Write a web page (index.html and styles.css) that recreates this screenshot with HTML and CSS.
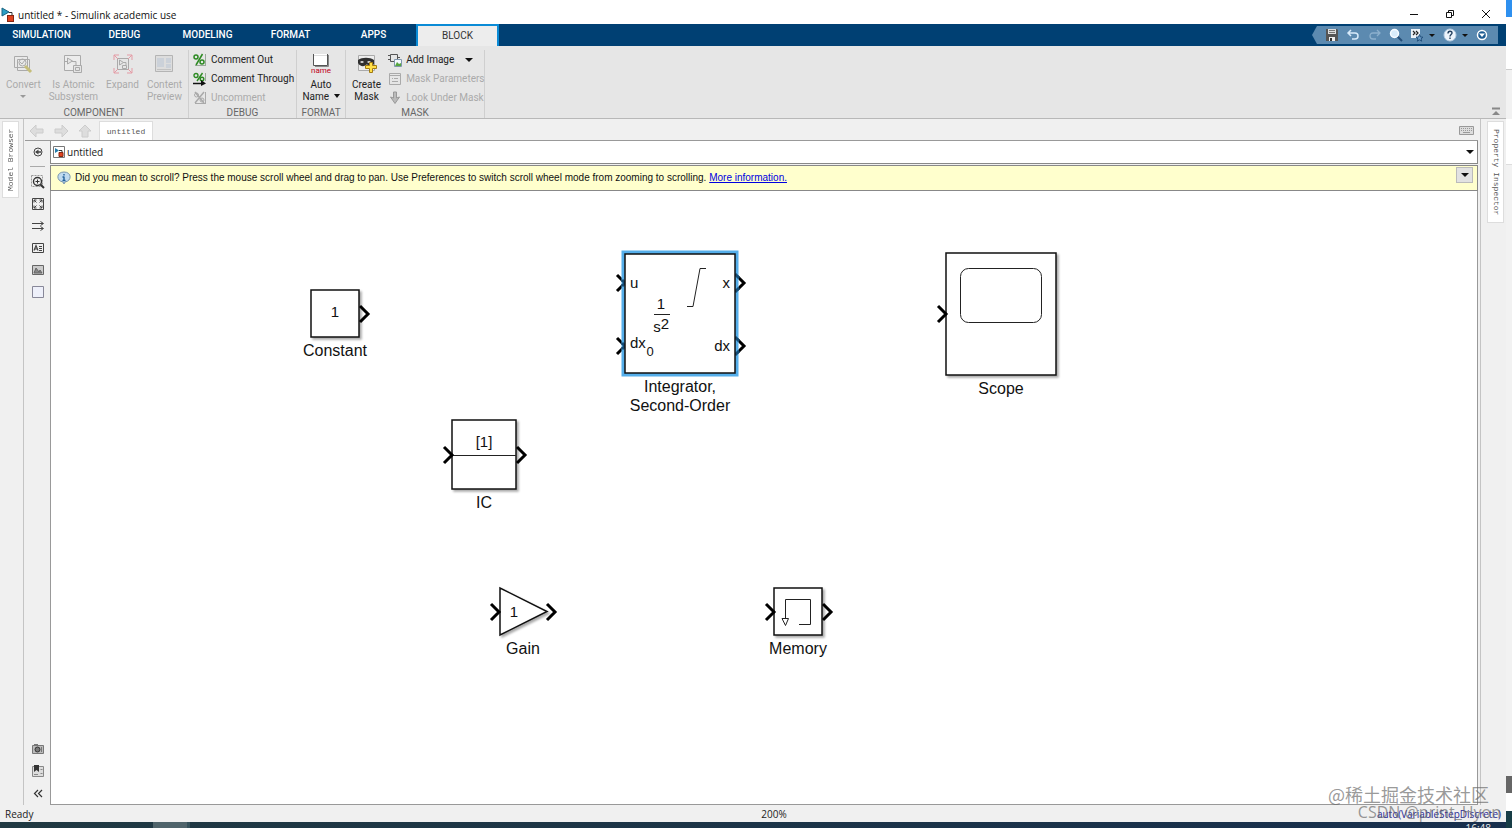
FILE: index.html
```html
<!DOCTYPE html>
<html lang="en">
<head>
<meta charset="utf-8">
<title>untitled * - Simulink academic use</title>
<link rel="stylesheet" href="styles.css">
</head>
<body>
<div class="desktop">
<div class="app">
  <header class="titlebar">
    <svg class="logo" width="14" height="14" viewBox="0 0 14 14"><path d="M1 0v8l7-4z" fill="#2b9fc6" stroke="#1b6582"/><path d="M8 4.500h3v3" fill="none" stroke="#333"/><rect x="6.500" y="7.500" width="6" height="6" fill="#e0431f" stroke="#842713"/></svg>
    <h1 class="title">untitled * - Simulink academic use</h1>
    <button class="win" aria-label="Minimize"><svg width="10" height="10"><path d="M1 5.500h8" stroke="#111"/></svg></button>
    <button class="win" aria-label="Restore"><svg width="10" height="10" fill="none" stroke="#111"><path d="M1.500 3.500h5v5h-5zM3.500 3.500v-2h5v5h-2"/></svg></button>
    <button class="win" aria-label="Close"><svg width="10" height="10"><path d="M1 1l8 8M9 1l-8 8" stroke="#111"/></svg></button>
  </header>

  <nav class="tabs">
    <button class="tab">SIMULATION</button>
    <button class="tab">DEBUG</button>
    <button class="tab">MODELING</button>
    <button class="tab">FORMAT</button>
    <button class="tab">APPS</button>
    <button class="tab active">BLOCK</button>
    <div class="quick">
      <button aria-label="Save"><svg width="14" height="14"><path d="M1 1h11l1 1v11H1z" fill="#555"/><path d="M3 1h8v5H3z" fill="#ddd"/><path d="M4 2.500h6M4 4.500h6" stroke="#777"/><path d="M4 9h6v4H4z" fill="#eee"/><path d="M5 10h2v3H5z" fill="#333"/></svg></button>
      <button aria-label="Undo"><svg width="14" height="14" fill="none" stroke="#d7eafa" stroke-width="1.500"><path d="M5 2L2 5l3 3M2 5h7c4 0 4 6 0 6H6"/></svg></button>
      <button aria-label="Redo"><svg width="14" height="14" fill="none" stroke="#8cb0cd" stroke-width="1.300"><path d="M9 2l3 3-3 3M12 5H5c-4 0-4 6 0 6h3"/></svg></button>
      <button aria-label="Search"><svg width="14" height="14"><path d="M8 8l5 5" stroke="#254e78" stroke-width="2"/><circle cx="5.500" cy="5.500" r="4" fill="#d9ecfa" stroke="#f7fbff" stroke-width="1.500"/></svg></button>
      <button class="with-caret" aria-label="Favorites"><svg width="14" height="14"><path d="M1 1h9v9H1z" fill="#eef3f8"/><path d="M3 3l2 2-2 2M6 3l2 2-2 2" fill="none" stroke="#222" stroke-width="1.200"/><path d="M9.500 6.500l1 2.500 2.500.2-2 1.600.7 2.400-2.200-1.400-2.200 1.400.7-2.400-2-1.600 2.500-.2z" fill="#6e9fc9" stroke="#24517d"/></svg><i class="caret"></i></button>
      <button class="with-caret" aria-label="Help"><svg width="14" height="14"><circle cx="7" cy="7" r="6" fill="#edf4fb" stroke="#b7cde2"/><path d="M5 5.500c0-3 4-3 4-.5C9 6.500 7 6.500 7 8.500M7 9.500v1.500" fill="none" stroke="#24405f" stroke-width="1.400"/></svg><i class="caret"></i></button>
      <button aria-label="Quick access options"><svg width="14" height="14"><circle cx="7" cy="7" r="4.500" fill="#1e5c92" stroke="#fff" stroke-width="1.500"/><path d="M4 5.500h6L7 9z" fill="#fff"/></svg></button>
    </div>
  </nav>

  <section class="ribbon" aria-label="Block">
    <div class="group component">
      <div class="items">
        <button class="big" disabled><svg width="20" height="20" fill="none" stroke="#aaa"><path d="M1.500 2.500h13v11h-13zM4.500 5.500h12v11h-12z" fill="#e9e9e9"/><circle cx="9.500" cy="8.500" r="3.500"/><path d="M7 8l2 2 3-4"/><path d="M12 12l6 6" stroke="#c5bd79" stroke-width="3"/></svg><span>Convert</span><i class="caret"></i></button>
        <button class="big" disabled><svg width="20" height="20" fill="none" stroke="#aaa"><path d="M1.500 1.500h16v15h-16z" fill="#ececec"/><path d="M4.500 4v6l5-3zM9 7.500h4v4M2 7.500h2M10.500 11.500h8v7h-8z" fill="#e5e5e5"/><path d="M12.500 13.500h4v3h-4z"/></svg><span>Is Atomic<br>Subsystem</span></button>
        <button class="big" disabled><svg width="20" height="20" fill="none" stroke="#aaa"><path d="M4.500 4.500h11v11h-11z"/><path d="M6.500 6v5l4-2.500zM10 8.500h3v3M9.500 11.500h4v3h-4z"/><path d="M1 6V1h5M14 1h5v5M19 14v5h-5M6 19H1v-5M1 1l4 4M19 1l-4 4M19 19l-4-4M1 19l4-4" stroke="#e49ba5"/></svg><span>Expand</span></button>
        <button class="big" disabled><svg width="20" height="20"><path d="M1.500 1.500h17v16h-17z" fill="#ddd" stroke="#b4b4b4"/><path d="M3 4h7v9H3zM12 4h5v5h-5zM12 10h5v4h-5z" fill="#cbd1d9"/><path d="M3 15.500h14" stroke="#c2c2c2"/></svg><span>Content<br>Preview</span></button>
      </div>
      <h2>COMPONENT</h2>
    </div>
    <div class="group debug">
      <div class="rows">
        <button class="small"><svg width="14" height="14" fill="none"><path d="M12.500 1v12M2 12.500h11" stroke="#9aa89a"/><g stroke="#2d8a22" stroke-width="1.500"><circle cx="3" cy="4" r="2"/><circle cx="9" cy="9" r="2"/><path d="M9.500 1L3 12"/></g></svg>Comment Out</button>
        <button class="small"><svg width="14" height="14" fill="none"><path d="M12.500 1v8" stroke="#9aa89a"/><g stroke="#2d8a22" stroke-width="1.400"><circle cx="3" cy="3.500" r="2"/><circle cx="9" cy="7" r="1.800"/><path d="M9.500 1L4 9"/></g><path d="M0 11.500h9" stroke="#111" stroke-width="1.500"/><path d="M8 8l5 3.500L8 14z" fill="#111"/></svg>Comment Through</button>
        <button class="small" disabled><svg width="14" height="14" fill="none" stroke="#aaa"><path d="M12.500 1v12M2 12.500h11"/><circle cx="3.500" cy="4" r="2"/><circle cx="9" cy="9" r="2"/><path d="M2 1l9 11M11 1L2 12" stroke-width="1.500"/></svg>Uncomment</button>
      </div>
      <h2>DEBUG</h2>
    </div>
    <div class="group format">
      <div class="items">
        <button class="big"><svg class="name-icon" width="22" height="20"><path d="M3.500 0v11.500h14V0" fill="#fff" stroke="#555"/><path d="M4 1.500h13" stroke="#ddd"/><path d="M18.500 1v11.500H5" fill="none" stroke="#888"/><text x="11" y="19" text-anchor="middle">name</text></svg><span>Auto<br>Name <i class="caret"></i></span></button>
      </div>
      <h2>FORMAT</h2>
    </div>
    <div class="group mask">
      <div class="items">
        <button class="big"><svg width="20" height="20"><path d="M1.500 1.500h16v15h-16z" fill="#eee" stroke="#aaa"/><path d="M1 6c4-3 12-3 16 0v4c-2 3-6 3-7 0-2 3-7 3-9-1z" fill="#303030"/><path d="M3 8q2-2 4 0-2 2-4 0M10 8q2-2 4 0-2 2-4 0" fill="#ddd"/><path d="M12.500 8.500h3v3h4v3h-4v4h-3v-4h-4v-3h4z" fill="#ffdf48" stroke="#a27b12"/></svg><span>Create<br>Mask</span></button>
        <div class="rows">
          <button class="small"><svg width="14" height="14" fill="none" stroke="#555"><path d="M2.500 1.500h7v7h-7zM0 2.500h2M0 6.500h2M10 4.500h2"/><path d="M6.500 6.500h7v7h-7z" fill="#f4f8ff" stroke="#8096ac"/><path d="M7 13l2-4 2 2 2-1v3z" fill="#56a63e" stroke="none"/></svg>Add Image<i class="caret push"></i></button>
          <button class="small" disabled><svg width="14" height="14" fill="none" stroke="#aaa"><path d="M1.500 1.500h11v11h-11zM1.500 3.500h11M4 6.500h1M6 6.500h4M4 9.500h6"/></svg>Mask Parameters</button>
          <button class="small" disabled><svg width="14" height="14"><path d="M5.500 1v6l-3-1L7 12.500 11.500 6l-3 1V1z" fill="#bbb" stroke="#999"/></svg>Look Under Mask</button>
        </div>
      </div>
      <h2>MASK</h2>
    </div>
    <button class="collapse" aria-label="Collapse ribbon"><svg width="10" height="10"><path d="M1 1.500h8" stroke="#888" stroke-width="2"/><path d="M5 4l4 4H1z" fill="#888"/></svg></button>
  </section>

  <main class="workspace">
    <aside class="dock left"><button class="side-tab flipped">Model Browser</button></aside>
    <div class="editor">
      <div class="doc-tabs">
        <button class="nav" aria-label="Back"><svg width="16" height="14"><path d="M1 7l6-6v4h7v4H7v4z"/></svg></button>
        <button class="nav" aria-label="Forward"><svg width="16" height="14"><path d="M15 7L9 1v4H2v4h7v4z"/></svg></button>
        <button class="nav" aria-label="Up"><svg width="16" height="14"><path d="M8 1l6 6h-3v6H5V7H2z"/></svg></button>
        <button class="doc">untitled</button>
        <button class="keyboard" aria-label="Keyboard"><svg width="15" height="9" fill="none" stroke="#999"><path d="M.5.500h14v8H.5z" fill="#ddd"/><path d="M2 2.500h11M2 4.500h11" stroke-dasharray="1 1"/><path d="M4 6.500h7"/></svg></button>
      </div>
      <div class="edit-body">
        <div class="palette">
          <button aria-label="Hide browser"><svg width="14" height="14" fill="none" stroke="#444"><circle cx="7" cy="7" r="4"/><path d="M5 7h5" stroke-width="1.500"/><path d="M7.500 4.500L4 7l3.500 2.500z" fill="#444" stroke="none"/></svg></button>
          <hr>
          <button aria-label="Zoom"><svg width="14" height="14" fill="none" stroke="#333"><path d="M.5.500h11v11H.5z" stroke="#999" stroke-dasharray="2 1"/><circle cx="6.500" cy="6.500" r="4" fill="#eee" stroke-width="1.400"/><path d="M4.500 6.500h4M6.500 4.500v4"/><path d="M9.500 9.500L13 13" stroke-width="2"/></svg></button>
          <button aria-label="Fit to view"><svg width="14" height="14" fill="none" stroke="#444"><path d="M1.500 1.500h11v11h-11z"/><path d="M3 5.500V3h2.500M8.500 3H11v2.500M11 8.500V11H8.500M5.500 11H3V8.500M3 3l2.500 2.500M11 3L8.500 5.500M11 11L8.500 8.500M3 11l2.500-2.500"/></svg></button>
          <button aria-label="Signals"><svg width="14" height="14" fill="none" stroke="#444"><path d="M1 4.500h11M9.500 2.500l3 2-3 2M1 9.500h11M9.500 7.500l3 2-3 2"/></svg></button>
          <button aria-label="Annotation"><svg width="14" height="14" fill="none" stroke="#444"><path d="M1.500 2.500h11v9h-11z"/><path d="M3 9.500l2-5 2 5M4 8h2" stroke-width="1.200"/><path d="M8 5.500h3M8 7.500h3M8 9.500h3"/></svg></button>
          <button aria-label="Image"><svg width="14" height="14" fill="none" stroke="#666"><path d="M1.500 2.500h11v9h-11z" fill="#ccc"/><path d="M3 10l2-5 3 4 1-2 2 3z" fill="#888"/></svg></button>
          <button aria-label="Area"><svg width="14" height="14"><path d="M1.500 1.500h11v11h-11z" fill="#eef0fa" stroke="#889"/></svg></button>
          <span class="spacer"></span>
          <button aria-label="Screenshot"><svg width="14" height="14" fill="none" stroke="#777"><path d="M1.500 3.500h11v8h-11zM3 2.500h4" fill="#bbb"/><circle cx="6.500" cy="7.500" r="2.500" fill="#777" stroke="#333"/><path d="M10.500 5v5"/></svg></button>
          <button aria-label="Bookmarks"><svg width="14" height="14" fill="none" stroke="#888"><path d="M1.500 2.500h11v10h-11z" fill="#ddd"/><path d="M3 1h5v7L5.500 6 3 8z" fill="#333" stroke="none"/><path d="M9.500 5.500h2M9.500 9.500h2M3 10.500h4"/></svg></button>
          <button aria-label="Collapse palette"><svg width="14" height="14" fill="none" stroke="#333" stroke-width="1.200"><path d="M7 4L3.500 7.500 7 11M11 4L7.500 7.500 11 11"/></svg></button>
        </div>
        <div class="stage">
          <div class="address">
            <svg width="12" height="12"><path d="M.5.500h11v11H.5z" fill="#fff" stroke="#777"/><path d="M2 2v5l4-2.500z" fill="#257caa"/><path d="M6 4.500h3V7" fill="none" stroke="#333"/><path d="M6 6.500h4v4H6z" fill="#e0431f" stroke="#842713"/></svg>
            <span>untitled</span>
            <button aria-label="Model path"><i class="caret"></i></button>
          </div>
          <div class="banner">
            <svg width="14" height="14"><path d="M7 1c8 0 8 9 1 10l-1 2-1-2C-1 10-1 1 7 1z" fill="#bfdaef" stroke="#7895ae"/><path d="M7 3v1.500M7 5.500V10M5.500 6H7M5.500 9.500h3" stroke="#23619b" stroke-width="1.400"/></svg>
            <p>Did you mean to scroll? Press the mouse scroll wheel and drag to pan. Use Preferences to switch scroll wheel mode from zooming to scrolling. <a href="#">More information.</a></p>
            <button aria-label="Message options"><i class="caret"></i></button>
          </div>
          <div class="canvas">
            <figure class="node constant">
              <svg width="98" height="49"><rect class="box" x="25" y="1" width="48" height="47"/><path class="port" d="M74 17l8 8-8 8"/><text x="49" y="28">1</text></svg>
              <figcaption>Constant</figcaption>
            </figure>
            <figure class="node ic">
              <svg width="114" height="71"><rect class="box" x="25" y="1" width="64" height="69"/><path class="thin" d="M25 36.500h64"/><path class="port" d="M17 28l8 8-8 8M90 28l8 8-8 8"/><text x="57" y="28">[1]</text></svg>
              <figcaption>IC</figcaption>
            </figure>
            <figure class="node gain">
              <svg width="98" height="49"><path class="box" d="M26 1v47l47-23.500z"/><path class="port" d="M17 17l8 8-8 8M73 17l8 8-8 8"/><text x="40" y="30">1</text></svg>
              <figcaption>Gain</figcaption>
            </figure>
            <figure class="node memory">
              <svg width="98" height="49"><rect class="box" x="25" y="1" width="48" height="47"/><path class="port" d="M17 17l8 8-8 8M74 17l8 8-8 8"/><path class="thin" d="M50 37.500h11.500v-25h-25V31M33 31.500h6.500l-3 7z"/></svg>
              <figcaption>Memory</figcaption>
            </figure>
            <figure class="node integrator">
              <svg width="160" height="121"><path class="port" d="M17 22l8 8-8 8M17 85l8 8-8 8M135 21l9 9-9 9M135 84l9 9-9 9"/><rect class="halo" x="23.500" y="-0.500" width="113" height="122"/><path class="through" d="M22 27l3 3-3 3M22 90l3 3-3 3M135 21l4 4M139 35l-4 4M135 84l4 4M139 98l-4 4"/><rect class="box flat" x="25" y="1" width="110" height="119"/>
                <text class="start" x="30" y="35">u</text><text class="start" x="30" y="95">dx</text><text x="50" y="103" class="sub">0</text><text class="end" x="130" y="35">x</text><text class="end" x="130" y="98">dx</text><text x="61" y="56">1</text><path class="thin" d="M54 61.500h16"/><text x="57" y="79">s</text><text x="65" y="76">2</text><path class="thin" d="M87 53.500h6l7-38h6"/></svg>
              <figcaption>Integrator,<br>Second-Order</figcaption>
            </figure>
            <figure class="node scope">
              <svg width="160" height="124"><rect class="box" x="25" y="1" width="110" height="122"/><path class="port" d="M17 54l8 8-8 8"/><rect class="thin" x="39.500" y="16.500" width="81" height="54" rx="8"/></svg>
              <figcaption>Scope</figcaption>
            </figure>
          </div>
        </div>
      </div>
    </div>
    <aside class="dock right"><button class="side-tab">Property Inspector</button></aside>
  </main>

  <footer class="status"><span>Ready</span><span>200%</span><a href="#">auto(VariableStepDiscrete)</a></footer>
</div>
<div class="behind"><i class="b1"></i><i class="b2"></i><i class="b3"></i><i class="b4"></i><i class="b5"></i><i class="b6"></i><i class="b7"></i></div>
<div class="taskbar"><span class="task"></span><span class="clock">16:48</span></div>
<div class="watermark"><p class="wm1">@稀土掘金技术社区</p><p class="wm2">CSDN @print_Hyon</p></div>
</div>
</body>
</html>
```
FILE: styles.css
```css
* { box-sizing: border-box; }
body, h1, h2, p, figure { margin: 0; }
body { font: 10px/12px "Open Sans", "Noto Sans", sans-serif; color: #222; overflow: hidden; }
button { font: inherit; color: inherit; background: none; border: 0; padding: 0; margin: 0; display: flex; align-items: center; justify-content: center; }
svg { display: block; flex: none; overflow: visible; }
i { display: block; font-style: normal; }
.caret { border: solid transparent; border-width: 4px 4px 0; border-top-color: #111; width: 8px; height: 4px; flex: none; }

.desktop { position: relative; height: 100vh; display: grid; grid-template-columns: 1fr 6px; grid-template-rows: 1fr 6px; }
.app { display: flex; flex-direction: column; min-width: 0; min-height: 0; background: #f0f0f0; }

.titlebar { height: 24px; background: #fff; display: flex; align-items: center; gap: 3px; padding: 6px 4px 0 1px; }
.title { font-size: 10px; font-weight: 400; color: #111; margin-right: auto; }
.win { width: 33px; height: 18px; margin-bottom: 2px; }

.tabs { height: 22px; background: #004073; display: flex; flex: none; font-family: Roboto, sans-serif; }
.tab { width: 83px; color: #fff; font-weight: 500; }
.tab.active { background: #ededed; color: #333; font-weight: 400; border: solid #0a8bd6; border-width: 2px 2px 0; margin-left: 1px; }
.quick { margin: 2px 8px 2px auto; width: 186px; background: #5c8ab0; clip-path: polygon(5px 0, 100% 0, 100% 100%, 5px 100%, 0 50%); display: flex; align-items: center; justify-content: space-between; padding: 0 9px 0 13px; }
.with-caret { gap: 5px; }
.with-caret .caret { border-width: 3px 3px 0; width: 6px; height: 3px; }

.ribbon { height: 73px; flex: none; background: #e6e6e6; border-bottom: 1px solid #b8b8b8; display: flex; padding-top: 4px; font-family: Roboto, sans-serif; }
.group { border-right: 1px solid #cfcfcf; display: flex; flex-direction: column; }
.group h2 { font-size: 10px; font-weight: 400; line-height: 10px; color: #666; text-align: center; }
.items { display: flex; height: 58px; padding-top: 4px; }
.big { flex-direction: column; justify-content: flex-start; line-height: 12px; }
.big span { margin-top: 5px; }
.big > .caret { margin-top: 4px; border-width: 3px 3px 0; width: 6px; height: 3px; }
.big span .caret { display: inline-block; vertical-align: 2px; margin-left: 2px; border-width: 4px 3px 0; width: 6px; }
button:disabled { color: #aaa; }
.big:disabled .caret { border-top-color: #999; }
.component { width: 189px; }
.component .items { justify-content: space-between; padding-left: 6px; padding-right: 6px; }
.debug { width: 108px; padding-left: 4px; }
.debug h2 { padding-right: 4px; }
.format { width: 49px; }
.format .items { justify-content: center; }
.name-icon text { font: 8px Roboto, sans-serif; fill: #c00020; }
.mask { width: 139px; padding-left: 6px; }
.mask h2 { padding-right: 6px; }
.mask .items { gap: 7px; }
.mask .rows { margin-top: -4px; }
.rows { display: flex; flex-direction: column; height: 58px; }
.small { height: 19px; gap: 4px; justify-content: flex-start; white-space: nowrap; }
.push { margin-left: 7px; }
.collapse { margin: auto 4px 0 auto; width: 12px; height: 12px; }

.workspace { flex: 1; min-height: 0; display: flex; }
.dock { width: 24px; flex: none; padding-top: 2px; }
.dock.left { border-right: 1px solid #c4c4c4; padding-left: 2px; }
.dock.right { width: 26px; border-left: 1px solid #c4c4c4; padding-left: 6px; }
.side-tab { writing-mode: vertical-rl; background: #fff; border: 1px solid #ddd; width: 17px; height: 77px; font: 8px/12px "Liberation Mono", monospace; color: #555; }
.side-tab.flipped { transform: rotate(180deg); }
.right .side-tab { height: 102px; }
.editor { flex: 1; min-width: 0; display: flex; flex-direction: column; padding: 0 2px 0 1px; }
.doc-tabs { height: 22px; flex: none; border-bottom: 1px solid #999; display: flex; align-items: center; gap: 8px; padding: 2px 4px 0; }
.nav { width: 16px; }
.nav svg { fill: #ddd; stroke: #ccc; }
.doc { background: #fff; height: 19px; width: 54px; margin-left: -2px; border: 1px solid #ddd; border-bottom: 0; font: 8px "Liberation Mono", monospace; color: #555; }
.keyboard { margin-left: auto; }
.edit-body { flex: 1; min-height: 0; display: flex; }
.palette { width: 25px; flex: none; display: flex; flex-direction: column; align-items: center; padding-bottom: 1px; }
.palette button { height: 22px; width: 22px; flex: none; }
.palette hr { width: 15px; border: 0; border-top: 1px solid #aaa; margin: 3px 0 4px; }
.spacer { flex: 1; }
.stage { flex: 1; min-width: 0; display: flex; flex-direction: column; }
.address { height: 23px; flex: none; background: #fff; border: 1px solid #888; border-top: 0; display: flex; align-items: center; gap: 2px; padding: 0 3px 0 2px; }
.address span { flex: 1; }
.banner { height: 26px; flex: none; margin-top: 1px; background: #ffffcd; border: 1px solid #888; display: flex; align-items: center; gap: 4px; padding: 0 4px 0 6px; font: 10px/14px "Liberation Sans", Arial, sans-serif; color: #111; }
.banner p { flex: 1; }
.banner a { color: #0000e0; }
.banner button { width: 17px; height: 16px; background: #e2e2e2; border: 1px solid #bbb; margin-bottom: 6px; }
.canvas { flex: 1; min-height: 0; background: #fff; border: 1px solid #999; border-top: 0; position: relative; }

.node { position: absolute; display: flex; flex-direction: column; align-items: center; font: 16px/19px "Liberation Sans", Arial, sans-serif; color: #111; text-align: center; }
.node figcaption { margin-top: 3px; }
.constant { left: 235px; top: 98px; }
.ic { left: 376px; top: 228px; }
.gain { left: 423px; top: 396px; }
.memory { left: 698px; top: 396px; }
.integrator { left: 549px; top: 62px; }
.scope { left: 870px; top: 61px; }
.node text { font-size: 15px; text-anchor: middle; fill: #111; }
.node .start { text-anchor: start; }
.node .end { text-anchor: end; }
.node .sub { font-size: 13px; }
.box { fill: #fff; stroke: #111; stroke-width: 1.5px; filter: drop-shadow(2px 2px 1px #0005); }
.box.flat { filter: none; }
.port { fill: none; stroke: #000; stroke-width: 3px; }
.through { fill: none; stroke: #134b75; stroke-width: 3px; }
.thin { fill: none; stroke: #222; stroke-width: 1px; }
.halo { fill: none; stroke: #55aeea; stroke-width: 4px; }

.status { height: 17px; flex: none; display: grid; grid-template-columns: 1fr auto 1fr; align-items: center; padding: 0 5px; gap: 4px; }
.status span:nth-child(2) { padding-left: 42px; }
.status a { color: #292995; text-decoration: none; justify-self: end; }

.behind { display: flex; flex-direction: column; background: #f2f2f2; grid-column: 2; grid-row: 1 / 3; }
.b1 { height: 17px; background: #2e90ef; }
.b2 { height: 53px; background: #fff; border-bottom: 1px solid #ccc; }
.b3 { height: 49px; background: #f2f2f2; }
.b4 { height: 46px; background: #fff; border-bottom: 1px solid #ddd; }
.b5 { flex: 1; }
.b6 { height: 17px; background: #666; }
.b7 { height: 35px; background: #173d46; border-top: 18px solid #fff; }
.taskbar { grid-column: 1; grid-row: 2; background: linear-gradient(90deg, #203942, #182f4d); display: flex; justify-content: space-between; overflow: hidden; }
.task { width: 37px; margin-left: 153px; background: #50646b; border-right: 3px solid #35505a; }
.clock { color: #eee; margin-right: 15px; }
.watermark { position: absolute; right: 11px; bottom: 8px; text-align: right; pointer-events: none; color: #666a; font: 18px/20px "Noto Sans CJK SC", sans-serif; }
.wm1 { margin-right: 12px; }
.wm2 { font: 16px/16px "Open Sans", sans-serif; }
```
